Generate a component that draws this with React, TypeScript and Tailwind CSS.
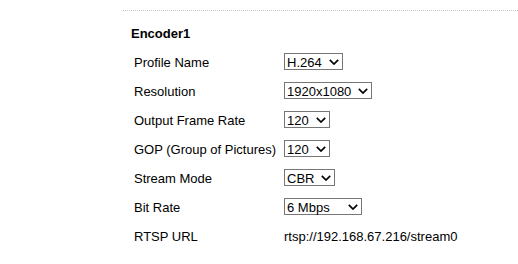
import React from "react";

function Chevron() {
  return (
    <svg width="10" height="6" viewBox="0 0 10 6" className="shrink-0">
      <path d="M0.8 0.8 L5 5 L9.2 0.8" fill="none" stroke="#000" strokeWidth="1.7" />
    </svg>
  );
}

function FakeSelect({ value, width }: { value: string; width: string }) {
  return (
    <div
      className={`flex h-[17px] items-center justify-between border border-[#767676] bg-white pl-[2px] pr-[3px] ${width}`}
    >
      <span className="whitespace-nowrap pt-[1px] leading-[15px]">{value}</span>
      <Chevron />
    </div>
  );
}

const rows: { label: string; value?: string; width?: string; text?: string }[] = [
  { label: "Profile Name", value: "H.264", width: "w-[59px]" },
  { label: "Resolution", value: "1920x1080", width: "w-[88px]" },
  { label: "Output Frame Rate", value: "120", width: "w-[46px]" },
  { label: "GOP (Group of Pictures)", value: "120", width: "w-[46px]" },
  { label: "Stream Mode", value: "CBR", width: "w-[51px]" },
  { label: "Bit Rate", value: "6 Mbps", width: "w-[78px]" },
  { label: "RTSP URL", text: "rtsp://192.168.67.216/stream0" },
];

export default function App() {
  return (
    <div
      className="h-[264px] w-[518px] overflow-hidden bg-white pl-[123px] pt-[10px] text-[13px] text-black"
      style={{ fontFamily: '"Liberation Sans", Arial, sans-serif' }}
    >
      <div className="border-t border-dotted border-[#c8c8c8]" />
      <div className="mt-[15px] pl-[8px] text-[13px] font-bold leading-[16px]">Encoder1</div>
      <div className="mt-[5px] pl-[11px]">
        {rows.map((r) => (
          <div key={r.label} className="flex h-[29px] items-center">
            <div className="w-[150px] shrink-0 pt-[2px] leading-[16px]">{r.label}</div>
            {r.value ? (
              <FakeSelect value={r.value} width={r.width!} />
            ) : (
              <div className="pt-[2px] leading-[16px]">{r.text}</div>
            )}
          </div>
        ))}
      </div>
    </div>
  );
}
